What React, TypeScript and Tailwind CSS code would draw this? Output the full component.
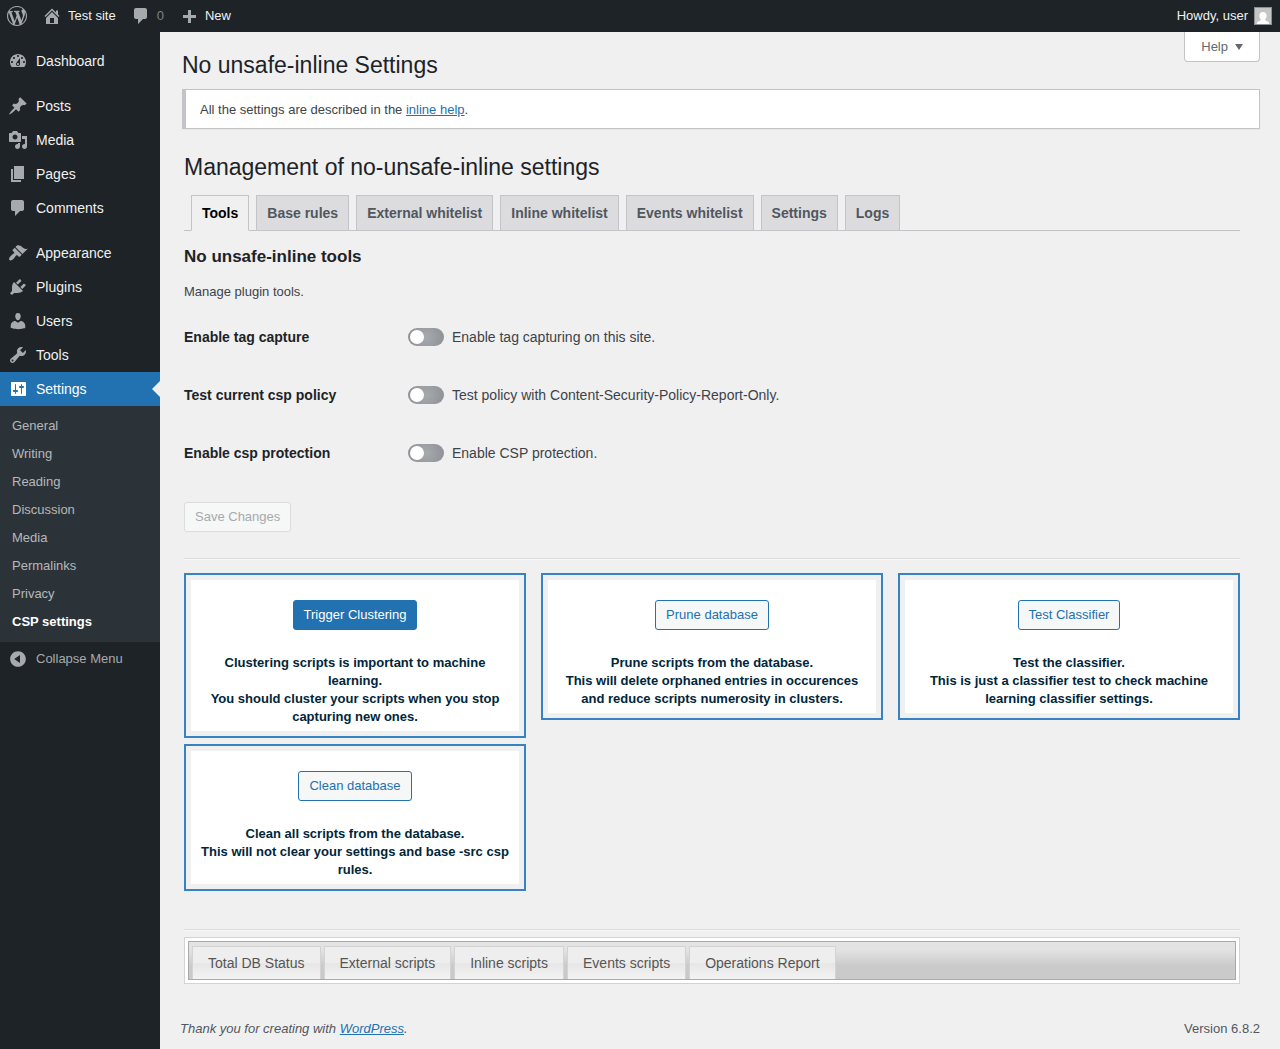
import { Fragment } from "react";

const icons = {
  wordpress:
    "M20 10c0-5.51-4.49-10-10-10C4.48 0 0 4.49 0 10c0 5.52 4.48 10 10 10 5.51 0 10-4.48 10-10zM7.78 15.37L4.37 6.22c.55-.02 1.17-.08 1.17-.08.5-.06.44-1.13-.06-1.11 0 0-1.45.11-2.37.11-.18 0-.37 0-.58-.01C4.12 2.69 6.87 1.11 10 1.11c2.33 0 4.45.87 6.05 2.34-.68-.11-1.65.39-1.65 1.58 0 .74.45 1.36.9 2.1.35.61.55 1.36.55 2.46 0 1.49-1.4 5-1.4 5l-3.03-8.37c.54-.02.82-.17.82-.17.5-.05.44-1.25-.06-1.22 0 0-1.44.12-2.38.12-.87 0-2.33-.12-2.33-.12-.5-.03-.56 1.2-.06 1.22l.92.08 1.26 3.41zM17.41 10c.24-.64.74-1.87.43-4.25.7 1.29 1.05 2.71 1.05 4.25 0 3.29-1.73 6.24-4.4 7.78.97-2.59 1.94-5.2 2.92-7.78zM6.1 18.09C3.12 16.65 1.11 13.53 1.11 10c0-1.3.23-2.48.72-3.59C3.25 10.3 4.67 14.2 6.1 18.09zm4.03-6.63l2.58 6.98c-.86.29-1.76.45-2.71.45-.79 0-1.57-.11-2.29-.33.81-2.38 1.62-4.74 2.42-7.1z",
  home: "M16 8.5l1.53 1.53-1.06 1.06L10 4.6l-6.47 6.49-1.06-1.06L10 2.5l4 4v-2h2v4zm-6-2.46l6 5.99V18H4v-5.97zM12 17v-5H8v5h4z",
  plus: "M17 9v3h-5v5H9v-5H4V9h5V4h3v5h5z",
  dashboard:
    "M3.76 16h12.48c1.1-1.37 1.76-3.11 1.76-5 0-4.42-3.58-8-8-8s-8 3.58-8 8c0 1.89.66 3.63 1.76 5zM10 4c.55 0 1 .45 1 1s-.45 1-1 1-1-.45-1-1 .45-1 1-1zM6 6c.55 0 1 .45 1 1s-.45 1-1 1-1-.45-1-1 .45-1 1-1zm8 0c.55 0 1 .45 1 1s-.45 1-1 1-1-.45-1-1 .45-1 1-1zm-5.37 5.55L12 7v6c0 1.1-.9 2-2 2s-2-.9-2-2c0-.57.24-1.08.63-1.45zM4 10c.55 0 1 .45 1 1s-.45 1-1 1-1-.45-1-1 .45-1 1-1zm12 0c.55 0 1 .45 1 1s-.45 1-1 1-1-.45-1-1 .45-1 1-1zm-5 3c0-.55-.45-1-1-1s-1 .45-1 1 .45 1 1 1 1-.45 1-1z",
  posts:
    "M10.44 3.02l1.82-1.82 6.36 6.35-1.83 1.82c-1.05-.68-2.48-.57-3.41.36l-.75.75c-.92.93-1.04 2.35-.35 3.41l-1.83 1.82-2.41-2.41-2.8 2.79c-.42.42-3.38 2.71-3.8 2.29s1.86-3.39 2.28-3.81l2.79-2.79L4.1 9.36l1.83-1.82c1.05.69 2.48.57 3.4-.36l.75-.75c.93-.92 1.05-2.35.36-3.41z",
  media:
    "M13 11V4c0-.55-.45-1-1-1h-1.67L9 1H5L3.67 3H2c-.55 0-1 .45-1 1v7c0 .55.45 1 1 1h10c.55 0 1-.45 1-1zM7 4.5c1.38 0 2.5 1.12 2.5 2.5S8.38 9.5 7 9.5 4.5 8.38 4.5 7 5.62 4.5 7 4.5zM14 6h5v10.5c0 1.38-1.12 2.5-2.5 2.5S14 17.88 14 16.5s1.12-2.5 2.5-2.5c.17 0 .34.02.5.05V9h-3V6zm-4 8.05V13h2v3.5c0 1.38-1.12 2.5-2.5 2.5S7 17.88 7 16.5 8.12 14 9.5 14c.17 0 .34.02.5.05z",
  pages: "M6 15V2h10v13H6zm-1 1h8v2H3V5h2v11z",
  comments:
    "M5 2h9c1.1 0 2 .9 2 2v7c0 1.1-.9 2-2 2h-2l-5 5v-5H5c-1.1 0-2-.9-2-2V4c0-1.1.9-2 2-2z",
  appearance:
    "M14.48 11.06L7.41 3.99l1.5-1.5c.5-.56 2.3-.47 3.51.32 1.21.8 1.43 1.28 2.91 2.1 1.18.64 2.45 1.26 4.45.85zm-.71.71L6.7 4.7 4.93 6.47c-.39.39-.39 1.02 0 1.41l1.06 1.06c.39.39.39 1.03 0 1.42-.6.6-1.43 1.11-2.21 1.69-.35.26-.7.53-1.01.84C1.43 14.23.4 16.08 1.4 17.07c.99 1 2.84-.03 4.18-1.36.31-.31.58-.66.85-1.02.57-.78 1.08-1.61 1.69-2.21.39-.39 1.02-.39 1.41 0l1.06 1.06c.39.39 1.02.39 1.41 0z",
  plugins:
    "M13.11 4.36L9.87 7.6 8 5.73l3.24-3.24c.35-.34 1.05-.2 1.56.32.52.51.66 1.21.31 1.55zm-8 1.77l.91-1.12 9.01 9.01-1.19.84c-.71.71-2.63 1.16-3.82 1.16H6.14L4.9 17.26c-.59.59-1.54.59-2.12 0-.59-.58-.59-1.53 0-2.12l1.24-1.24v-3.88c0-1.13.4-3.19 1.09-3.89zm7.26 3.97l3.24-3.24c.34-.35 1.04-.21 1.55.31.52.51.66 1.21.31 1.55l-3.24 3.25z",
  users:
    "M10 9.25c-2.27 0-2.73-3.44-2.73-3.44C7 4.02 7.82 2 9.97 2c2.16 0 2.98 2.02 2.71 3.81 0 0-.41 3.44-2.68 3.44zm0 2.57L12.72 10c2.39 0 4.52 2.33 4.52 4.53v2.49s-3.65 1.13-7.24 1.13c-3.65 0-7.24-1.13-7.24-1.13v-2.49c0-2.25 1.94-4.48 4.47-4.48z",
  tools:
    "M16.68 9.77c-1.34 1.34-3.3 1.67-4.95.99l-5.41 6.52c-.99.99-2.59.99-3.58 0s-.99-2.59 0-3.57l6.52-5.42c-.68-1.65-.35-3.61.99-4.95 1.28-1.28 3.12-1.62 4.72-1.06l-2.89 2.89 2.82 2.82 2.86-2.87c.53 1.58.18 3.39-1.08 4.65zM3.81 16.21c.4.39 1.04.39 1.43 0 .4-.4.4-1.04 0-1.43-.39-.4-1.03-.4-1.43 0-.39.39-.39 1.03 0 1.43z",
  settings:
    "M18 16V4c0-.55-.45-1-1-1H4c-.55 0-1 .45-1 1v12c0 .55.45 1 1 1h13c.55 0 1-.45 1-1zM8 11h1c.55 0 1 .45 1 1s-.45 1-1 1H8v1.5c0 .28-.22.5-.5.5s-.5-.22-.5-.5V13H6c-.55 0-1-.45-1-1s.45-1 1-1h1V5.5c0-.28.22-.5.5-.5s.5.22.5.5V11zm5-2h-1c-.55 0-1-.45-1-1s.45-1 1-1h1V5.5c0-.28.22-.5.5-.5s.5.22.5.5V7h1c.55 0 1 .45 1 1s-.45 1-1 1h-1v5.5c0 .28-.22.5-.5.5s-.5-.22-.5-.5V9z",
  collapse:
    "M10 2.16c4.33 0 7.84 3.51 7.84 7.84s-3.51 7.84-7.84 7.84S2.16 14.33 2.16 10 5.67 2.16 10 2.16zm2 11.72V6.12L6.18 9.97z",
};

type IconName = keyof typeof icons;

function Dashicon({ name }: { name: IconName }) {
  return (
    <svg
      viewBox="0 0 20 20"
      className="size-5 shrink-0"
      fill="currentColor"
      fillRule="evenodd"
      aria-hidden="true"
    >
      <path d={icons[name]} />
    </svg>
  );
}

const menu: { label: string; icon: IconName; separator?: boolean }[] = [
  { label: "Dashboard", icon: "dashboard" },
  { label: "Posts", icon: "posts", separator: true },
  { label: "Media", icon: "media" },
  { label: "Pages", icon: "pages" },
  { label: "Comments", icon: "comments" },
  { label: "Appearance", icon: "appearance", separator: true },
  { label: "Plugins", icon: "plugins" },
  { label: "Users", icon: "users" },
  { label: "Tools", icon: "tools" },
];

const submenu = [
  "General",
  "Writing",
  "Reading",
  "Discussion",
  "Media",
  "Permalinks",
  "Privacy",
  "CSP settings",
];

const tabs = [
  "Tools",
  "Base rules",
  "External whitelist",
  "Inline whitelist",
  "Events whitelist",
  "Settings",
  "Logs",
];

const toggles = [
  {
    id: "tag-capture",
    title: "Enable tag capture",
    text: "Enable tag capturing on this site.",
  },
  {
    id: "test-policy",
    title: "Test current csp policy",
    text: "Test policy with Content-Security-Policy-Report-Only.",
  },
  {
    id: "csp-protection",
    title: "Enable csp protection",
    text: "Enable CSP protection.",
  },
];

const cards = [
  {
    button: "Trigger Clustering",
    primary: true,
    lines: [
      "Clustering scripts is important to machine learning.",
      "You should cluster your scripts when you stop capturing new ones.",
    ],
  },
  {
    button: "Prune database",
    lines: [
      "Prune scripts from the database.",
      "This will delete orphaned entries in occurences and reduce scripts numerosity in clusters.",
    ],
  },
  {
    button: "Test Classifier",
    lines: [
      "Test the classifier.",
      "This is just a classifier test to check machine learning classifier settings.",
    ],
  },
  {
    button: "Clean database",
    lines: [
      "Clean all scripts from the database.",
      "This will not clear your settings and base -src csp rules.",
    ],
  },
];

const reports = [
  "Total DB Status",
  "External scripts",
  "Inline scripts",
  "Events scripts",
  "Operations Report",
];

function AdminBar() {
  return (
    <header className="flex h-8 items-center bg-[#1d2327] pr-2 pl-[7px] text-[13px] text-[#f0f0f1]">
      <a href="#about" aria-label="About WordPress" className="text-[#a7aaad]">
        <Dashicon name="wordpress" />
      </a>
      <a href="#site" className="ml-[15px] flex items-center gap-1.5">
        <span className="text-[#a7aaad]">
          <Dashicon name="home" />
        </span>
        Test site
      </a>
      <a
        href="#comments"
        className="ml-[15px] flex items-center gap-1.5 text-[#a7aaad]"
      >
        <Dashicon name="comments" />
        <span className="opacity-70">0</span>
      </a>
      <a href="#new" className="ml-[15px] flex items-center gap-1.5">
        <span className="text-[#a7aaad]">
          <Dashicon name="plus" />
        </span>
        New
      </a>
      <a href="#profile" className="ml-auto flex items-center gap-1.5">
        Howdy, user
        <svg viewBox="0 0 18 18" className="size-[18px]" aria-hidden="true">
          <path fill="#8c8f94" d="M0 0h18v18H0z" />
          <path fill="#c5c5c5" d="M1 1h16v16H1z" />
          <path
            fill="#fff"
            d="M9 5c2.3 0 3.6 1.7 3.6 3.8 0 1.5-.6 2.8-1.5 3.6.3 1.1 1.2 1.5 2.4 1.9 1 .4 1.5 1.300 1.7 2.700H2.800c.2-1.400.7-2.300 1.700-2.700 1.200-.4 2.100-.8 2.400-1.900-.9-.8-1.500-2.100-1.500-3.600C5.400 6.700 6.700 5 9 5z"
          />
        </svg>
      </a>
    </header>
  );
}

function Sidebar() {
  return (
    <nav className="w-40 shrink-0 bg-[#1d2327] pt-3 text-sm text-[#f0f0f1]">
      <ul>
        {menu.map((item) => (
          <li key={item.label} className={item.separator ? "mt-[11px]" : ""}>
            <a href="#menu" className="flex h-[34px] items-center gap-2 pl-2">
              <span className="text-[#a7aaad]">
                <Dashicon name={item.icon} />
              </span>
              {item.label}
            </a>
          </li>
        ))}
        <li>
          <a
            href="#settings"
            className="relative flex h-[34px] items-center gap-2 bg-[#2271b1] pl-2 text-white"
          >
            <Dashicon name="settings" />
            Settings
            <span className="absolute top-[9px] right-0 border-8 border-l-0 border-transparent border-r-[#f0f0f1]" />
          </a>
          <ul className="bg-[#2c3338] py-1.5 text-[13px] text-[#b5b8bb]">
            {submenu.map((label) => (
              <li key={label}>
                <a
                  href="#submenu"
                  className={`block px-3 leading-7 ${label === "CSP settings" ? "font-bold text-white" : ""}`}
                >
                  {label}
                </a>
              </li>
            ))}
          </ul>
        </li>
      </ul>
      <button
        type="button"
        className="flex h-[34px] items-center gap-2 pl-2 text-[13px] text-[#a7aaad]"
      >
        <Dashicon name="collapse" />
        Collapse Menu
      </button>
    </nav>
  );
}

function Divider() {
  return (
    <hr className="h-0.5 border-t border-b border-t-[#dcdcde] border-b-[#f6f7f7]" />
  );
}

export default function App() {
  return (
    <div className="flex min-h-screen flex-col bg-[#f0f0f1] font-['Liberation_Sans',Arial,sans-serif] text-[13px] text-[#3c434a]">
      <AdminBar />
      <div className="flex grow">
        <Sidebar />
        <div className="flex min-w-0 grow flex-col pr-5 pl-[22px]">
          <div className="flex h-[57px] items-start justify-between">
            <h1 className="mt-[18px] text-[23px] leading-[30px] text-[#1d2327]">
              No unsafe-inline Settings
            </h1>
            <button
              type="button"
              className="flex h-[30px] items-center gap-[7px] rounded-b border border-t-0 border-[#c3c4c7] bg-white px-4 text-[#646970]"
            >
              Help
              <svg viewBox="0 0 8 6" className="h-1.5 w-2" aria-hidden="true">
                <path d="M0 0h8L4 6z" fill="currentColor" />
              </svg>
            </button>
          </div>

          <div className="border border-l-4 border-[#c3c4c7] bg-white px-3.5 pt-[11px] pb-[9px] leading-[18px] shadow-[0_1px_1px_rgba(0,0,0,0.04)]">
            All the settings are described in the{" "}
            <a href="#help" className="text-[#2271b1] underline">
              inline help
            </a>
            .
          </div>

          <main className="mr-5 ml-0.5 pt-[23px]">
            <h2 className="text-[23px] leading-[30px] text-[#1d2327]">
              Management of no-unsafe-inline settings
            </h2>

            <nav className="mt-[13px] flex gap-[7px] border-b border-[#c3c4c7] pl-[7px] text-sm leading-6 font-bold">
              {tabs.map((tab) => (
                <a
                  key={tab}
                  href="#tab"
                  className={
                    tab === "Tools"
                      ? "-mb-px border border-[#c3c4c7] border-b-[#f0f0f1] bg-[#f0f0f1] px-2.5 py-[5px] text-black"
                      : "border border-b-0 border-[#c3c4c7] bg-[#dcdcde] px-2.5 py-[5px] text-[#50575e]"
                  }
                >
                  {tab}
                </a>
              ))}
            </nav>

            <form>
              <h3 className="mt-4 text-[17px] leading-5 font-bold text-[#1d2327]">
                No unsafe-inline tools
              </h3>
              <p className="mt-[15px] leading-5">Manage plugin tools.</p>

              <div className="mt-1.5 text-sm">
                {toggles.map((toggle) => (
                  <div key={toggle.id} className="flex h-[58px] items-center">
                    <span className="w-56 font-bold text-[#1d2327]">
                      {toggle.title}
                    </span>
                    <input
                      id={toggle.id}
                      type="checkbox"
                      aria-label={toggle.title}
                      className="h-[18px] w-9 appearance-none rounded-full bg-[radial-gradient(circle,#a7aaad_0%,#8c8f94_100%)] p-0.5 before:block before:size-3.5 before:rounded-full before:bg-white checked:bg-[#2271b1] checked:before:translate-x-[18px]"
                    />
                    <label htmlFor={toggle.id} className="ml-2">
                      {toggle.text}
                    </label>
                  </div>
                ))}
              </div>

              <button
                type="submit"
                disabled
                className="mt-5 h-[30px] rounded-[3px] border border-[#dcdcde] bg-[#f6f7f7] px-2.5 text-[#a7aaad]"
              >
                Save Changes
              </button>
            </form>

            <div className="mt-[26px]">
              <Divider />
            </div>

            <div className="mt-[13px] grid grid-cols-3 items-start gap-x-[15px] gap-y-1.5">
              {cards.map((card) => (
                <section
                  key={card.button}
                  className="border-2 border-[#3582c4] p-[5px]"
                >
                  <div className="bg-white px-2 pt-5 pb-[5px] text-center">
                    <button
                      type="button"
                      className={
                        card.primary
                          ? "h-[30px] rounded-[3px] border border-[#2271b1] bg-[#2271b1] px-2.5 text-white"
                          : "h-[30px] rounded-[3px] border border-[#2271b1] bg-[#f6f7f7] px-2.5 text-[#2271b1]"
                      }
                    >
                      {card.button}
                    </button>
                    <p className="mt-6 leading-[18px] font-bold text-[#00263a]">
                      {card.lines.map((line, i) => (
                        <Fragment key={line}>
                          {i > 0 && <br />}
                          {line}
                        </Fragment>
                      ))}
                    </p>
                  </div>
                </section>
              ))}
            </div>

            <div className="mt-[38px]">
              <Divider />
            </div>

            <div className="mt-1.5 border border-[#d3d3d3] bg-white p-[3px]">
              <nav className="flex gap-[3px] border border-[#aaa] bg-linear-to-b from-[#e3e3e3] from-20% to-[#cacaca] to-65% pt-1 pl-[3px] text-sm text-[#555]">
                {reports.map((report) => (
                  <a
                    key={report}
                    href="#report"
                    className="border border-b-0 border-[#d3d3d3] bg-[linear-gradient(#eeeeee_50%,#e6e6e6_50%,#f3f3f3)] px-[15px] py-1.5 leading-5"
                  >
                    {report}
                  </a>
                ))}
              </nav>
            </div>
          </main>

          <footer className="-ml-0.5 mt-auto flex justify-between pt-8 pb-2.5 leading-5 text-[#50575e]">
            <p className="italic">
              Thank you for creating with{" "}
              <a href="#wordpress" className="text-[#2271b1] underline">
                WordPress
              </a>
              .
            </p>
            <p>Version 6.8.2</p>
          </footer>
        </div>
      </div>
    </div>
  );
}
